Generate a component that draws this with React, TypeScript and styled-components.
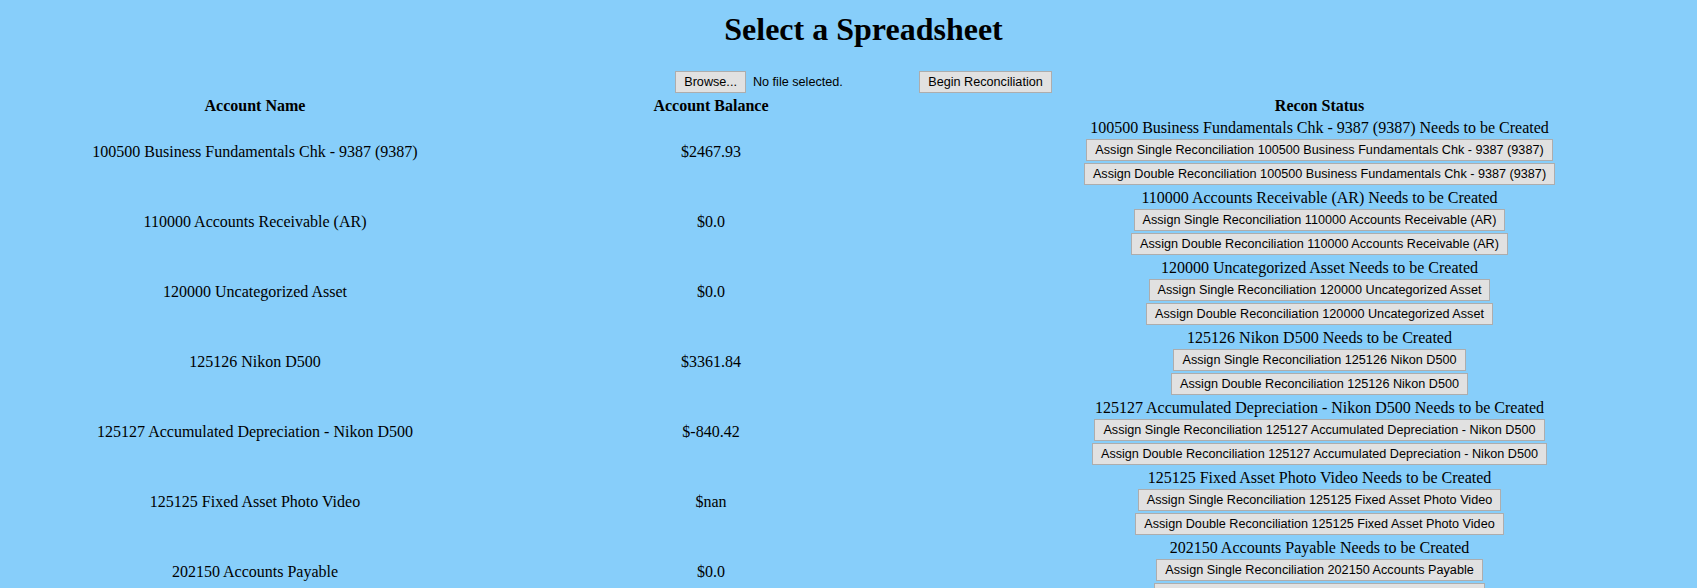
import React from 'react';
import styled, { createGlobalStyle } from 'styled-components';

const GlobalStyle = createGlobalStyle`
  html, body {
    margin: 0;
    padding: 0;
    background: #87cefa;
    overflow: hidden;
  }
  body {
    font-family: "Liberation Serif", "Times New Roman", serif;
    font-size: 16px;
    color: #000;
  }
`;

const Page = styled.div`
  width: 1711px;
  padding: 11px 8px 0;
`;

const Title = styled.h1`
  margin: 0 0 23px;
  font-size: 32px;
  line-height: 37px;
  font-weight: bold;
  text-align: center;
`;

const UploadForm = styled.form`
  display: flex;
  justify-content: center;
  align-items: center;
  gap: 4px;
  height: 22px;
`;

const FileInput = styled.div`
  display: flex;
  align-items: center;
  width: 240px;
`;

const UiButton = styled.button`
  font-family: "Liberation Sans", Arial, sans-serif;
  font-size: 12.65px;
  height: 22px;
  padding: 0 8px;
  margin: 0;
  border: 1px solid #adadad;
  border-radius: 0;
  background: #e1e1e1;
  color: #000;
  white-space: nowrap;
  line-height: 20px;
`;

const FileLabel = styled.span`
  font-family: "Liberation Sans", Arial, sans-serif;
  font-size: 12.65px;
  margin-left: 7px;
  white-space: nowrap;
`;

const Table = styled.table`
  width: 100%;
  margin-top: 1px;
  border-collapse: separate;
  border-spacing: 2px;
  table-layout: fixed;
`;

const HeadCell = styled.th<{ $w?: number }>`
  width: ${(p) => (p.$w ? `${p.$w}px` : 'auto')};
  box-sizing: border-box;
  padding: 1px;
  font-size: 16px;
  line-height: 18px;
  font-weight: bold;
  text-align: center;
`;

const Cell = styled.td`
  padding: 1px;
  font-size: 16px;
  line-height: 18px;
  text-align: center;
  vertical-align: middle;
`;

const ReconStack = styled.div`
  display: flex;
  flex-direction: column;
  align-items: center;
`;

const StatusText = styled.div`
  line-height: 18px;
  white-space: nowrap;
`;

const ButtonLine = styled.div`
  height: 24px;
  display: flex;
  align-items: flex-end;
  justify-content: center;
`;

type Account = { name: string; balance: string };

const accounts: Account[] = [
  { name: '100500 Business Fundamentals Chk - 9387 (9387)', balance: '$2467.93' },
  { name: '110000 Accounts Receivable (AR)', balance: '$0.0' },
  { name: '120000 Uncategorized Asset', balance: '$0.0' },
  { name: '125126 Nikon D500', balance: '$3361.84' },
  { name: '125127 Accumulated Depreciation - Nikon D500', balance: '$-840.42' },
  { name: '125125 Fixed Asset Photo Video', balance: '$nan' },
  { name: '202150 Accounts Payable', balance: '$0.0' },
];

export default function App() {
  return (
    <>
      <GlobalStyle />
      <Page>
        <Title>Select a Spreadsheet</Title>
        <UploadForm onSubmit={(e) => e.preventDefault()}>
          <FileInput>
            <UiButton type="button">Browse...</UiButton>
            <FileLabel>No file selected.</FileLabel>
          </FileInput>
          <UiButton type="submit">Begin Reconciliation</UiButton>
        </UploadForm>
        <Table>
          <thead>
            <tr>
              <HeadCell $w={490}>Account Name</HeadCell>
              <HeadCell $w={418}>Account Balance</HeadCell>
              <HeadCell>Recon Status</HeadCell>
            </tr>
          </thead>
          <tbody>
            {accounts.map((a) => (
              <tr key={a.name}>
                <Cell>{a.name}</Cell>
                <Cell>{a.balance}</Cell>
                <Cell>
                  <ReconStack>
                    <StatusText>{a.name} Needs to be Created</StatusText>
                    <ButtonLine>
                      <UiButton type="button">Assign Single Reconciliation {a.name}</UiButton>
                    </ButtonLine>
                    <ButtonLine>
                      <UiButton type="button">Assign Double Reconciliation {a.name}</UiButton>
                    </ButtonLine>
                  </ReconStack>
                </Cell>
              </tr>
            ))}
          </tbody>
        </Table>
      </Page>
    </>
  );
}
